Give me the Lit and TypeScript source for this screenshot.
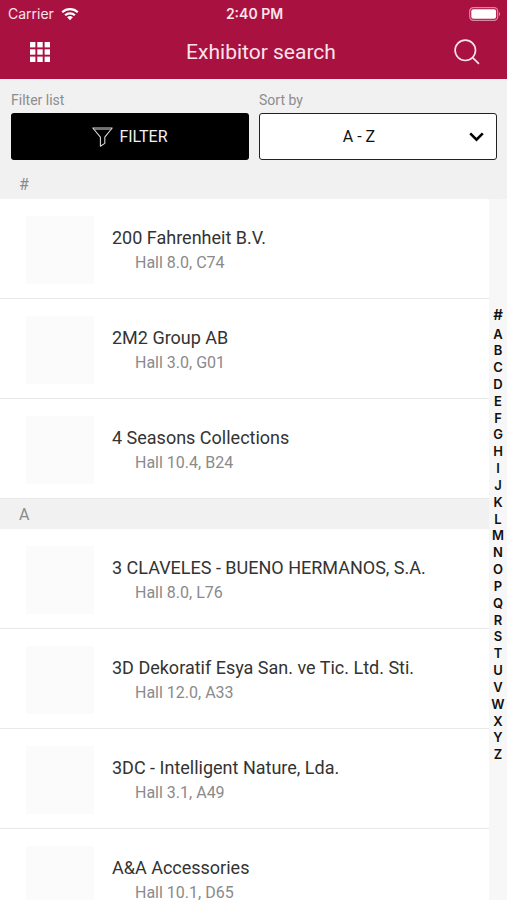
import { LitElement, html, svg, css } from "lit";
import { customElement, state } from "lit/decorators.js";

interface Exhibitor {
  name: string;
  hall: string;
}

interface Group {
  letter: string;
  items: Exhibitor[];
}

const GROUPS: Group[] = [
  {
    letter: "#",
    items: [
      { name: "200 Fahrenheit B.V.", hall: "Hall 8.0, C74" },
      { name: "2M2 Group AB", hall: "Hall 3.0, G01" },
      { name: "4 Seasons Collections", hall: "Hall 10.4, B24" },
    ],
  },
  {
    letter: "A",
    items: [
      { name: "3 CLAVELES - BUENO HERMANOS, S.A.", hall: "Hall 8.0, L76" },
      { name: "3D Dekoratif Esya San. ve Tic. Ltd. Sti.", hall: "Hall 12.0, A33" },
      { name: "3DC - Intelligent Nature, Lda.", hall: "Hall 3.1, A49" },
      { name: "A&A Accessories", hall: "Hall 10.1, D65" },
    ],
  },
];

const LETTERS = [..."ABCDEFGHIJKLMNOPQRSTUVWXYZ"];

@customElement("status-bar")
export class StatusBar extends LitElement {
  static styles = css`
    :host {
      display: grid;
      grid-template-columns: 1fr auto 1fr;
      align-items: center;
      height: 28px;
      padding: 0 6px 0 8px;
      color: #fbe3ea;
      font: 14px/28px Inter, sans-serif;
    }
    .carrier {
      display: flex;
      align-items: center;
      gap: 7px;
    }
    .time {
      font-weight: 600;
    }
    .battery {
      justify-self: end;
    }
    svg {
      display: block;
    }
  `;

  render() {
    return html`
      <span class="carrier">
        Carrier
        <svg width="18" height="14" viewBox="0 0 18 14" aria-hidden="true">
          <g fill="none" stroke="#fff" stroke-width="2.2">
            <path d="M1.2 5.2a11.2 11.2 0 0 1 15.6 0" />
            <path d="M4.1 8.3a7 7 0 0 1 9.8 0" />
          </g>
          <path d="M9 13.2 6.1 10.3a4.2 4.2 0 0 1 5.8 0z" fill="#fff" />
        </svg>
      </span>
      <span class="time">2:40 PM</span>
      <svg class="battery" width="32" height="14" viewBox="0 0 32 14" aria-hidden="true">
        <rect x="0.7" y="0.7" width="28" height="12.6" rx="3.6" fill="none" stroke="#d98aa2" stroke-width="1.2" />
        <rect x="2.3" y="2.3" width="24.8" height="9.4" rx="2" fill="#fff" />
        <path d="M30 5v4a2.4 2.4 0 0 0 0-4z" fill="#d98aa2" />
      </svg>
    `;
  }
}

@customElement("app-root")
export class AppRoot extends LitElement {
  @state() private sort = "az";

  static styles = css`
    :host {
      display: flex;
      flex-direction: column;
      height: 100vh;
      overflow: hidden;
      background: #fff;
      color: #333;
      font-family: Roboto, sans-serif;
    }
    * {
      box-sizing: border-box;
    }
    svg {
      display: block;
    }
    .top {
      flex: none;
      background: #a91141;
    }
    .bar {
      display: grid;
      grid-template-columns: 40px 1fr 40px;
      align-items: center;
      height: 51px;
      padding: 0 20px 3px;
    }
    .title {
      margin: 0;
      padding-left: 15px;
      color: #fbe3ea;
      font-size: 21px;
      font-weight: 400;
      line-height: 48px;
      text-align: center;
    }
    .icon {
      display: grid;
      place-items: center;
      width: 40px;
      height: 40px;
      padding: 0;
      border: 0;
      background: none;
    }
    .controls {
      flex: none;
      display: grid;
      grid-template-columns: 1fr 1fr;
      gap: 10px;
      padding: 12px 10px 9px 11px;
      background: #f1f1f1;
    }
    .label {
      display: block;
      margin-bottom: 4px;
      color: #8d8d8d;
      font-size: 14px;
      line-height: 18px;
    }
    .filter {
      display: flex;
      align-items: center;
      justify-content: center;
      gap: 6px;
      width: 100%;
      height: 47px;
      padding: 0;
      border: 0;
      border-radius: 3px;
      background: #000;
      color: #f1f1f1;
      font: 16px/20px Roboto, sans-serif;
    }
    .sort {
      display: grid;
      align-items: center;
    }
    .sort select,
    .sort svg {
      grid-area: 1 / 1;
    }
    .sort svg {
      justify-self: end;
      margin-right: 13px;
      pointer-events: none;
    }
    .sort select {
      width: 100%;
      height: 47px;
      padding: 0 38px 0 0;
      appearance: none;
      border: 1px solid #222;
      border-radius: 3px;
      background: #fff;
      color: #111;
      font: 16px/20px Roboto, sans-serif;
      text-align: center;
      text-align-last: center;
    }
    .body {
      position: relative;
      flex: 1;
      min-height: 0;
    }
    .list {
      height: 100%;
      overflow-y: auto;
      scrollbar-width: none;
    }
    .heading {
      margin: 0;
      height: 30px;
      padding: 0 19px;
      background: #f1f1f1;
      color: #8a8a8a;
      font-size: 16px;
      font-weight: 400;
      line-height: 32px;
    }
    .rows {
      margin: 0;
      padding: 0;
      list-style: none;
    }
    .row {
      display: flex;
      align-items: center;
      gap: 18px;
      height: 100px;
      padding: 2px 26px 0;
      border-bottom: 1px solid #e8e8e8;
    }
    .logo {
      flex: none;
      width: 68px;
      height: 68px;
      background: #fbfbfb;
    }
    .text {
      min-width: 0;
    }
    .name {
      margin: 0;
      font-size: 18px;
      line-height: 26px;
      white-space: nowrap;
    }
    .hall {
      margin: 0;
      padding-left: 23px;
      color: #8a8a8a;
      font-size: 16px;
      line-height: 24px;
    }
    .index {
      position: absolute;
      top: 30px;
      right: 0;
      bottom: 0;
      display: flex;
      flex-direction: column;
      justify-content: center;
      gap: 3px;
      width: 18px;
      padding-bottom: 30px;
      background: #f7f7f7;
    }
    .letters {
      display: flex;
      flex-direction: column;
      justify-content: space-between;
      height: 437px;
    }
    .letter {
      color: #111;
      font: 600 13px/16px Inter, sans-serif;
      text-align: center;
      text-decoration: none;
    }
    .hash {
      font-size: 15px;
    }
  `;

  private onSort(e: Event) {
    this.sort = (e.target as HTMLSelectElement).value;
  }

  private get groups(): Group[] {
    if (this.sort === "az") return GROUPS;
    return [...GROUPS].reverse().map((g) => ({ ...g, items: [...g.items].reverse() }));
  }

  render() {
    return html`
      <header class="top">
        <status-bar></status-bar>
        <div class="bar">
          <button class="icon" aria-label="Menu">
            <svg width="20" height="20" viewBox="0 0 20 20" fill="#fff">
              ${[0, 7.3, 14.6].map((y) =>
                [0, 7.3, 14.6].map((x) => svg`<rect x=${x} y=${y} width="5.4" height="5.4" />`)
              )}
            </svg>
          </button>
          <h1 class="title">Exhibitor search</h1>
          <button class="icon" aria-label="Search">
            <svg width="26" height="26" viewBox="0 0 26 26" fill="none" stroke="#fbe3ea" stroke-width="1.7">
              <circle cx="11.3" cy="11.3" r="10.2" />
              <path d="m18.4 18.4 6.6 6.4" />
            </svg>
          </button>
        </div>
      </header>

      <section class="controls">
        <div>
          <label class="label" for="filter">Filter list</label>
          <button class="filter" id="filter">
            <svg width="21" height="20" viewBox="0 0 21 20" fill="none" stroke="#d8d8d8" stroke-width="1.1" stroke-linejoin="round">
              <path d="M.8 1h19.4l-7.4 9.2v6.2l-4.4 2.8v-9z" />
              <path d="M2.6 2.4h15.8" stroke-width=".6" />
            </svg>
            FILTER
          </button>
        </div>
        <div>
          <label class="label" for="sort">Sort by</label>
          <div class="sort">
            <select id="sort" .value=${this.sort} @change=${this.onSort}>
              <option value="az">A - Z</option>
              <option value="za">Z - A</option>
            </select>
            <svg width="15" height="10" viewBox="0 0 15 10" fill="none" stroke="#000" stroke-width="2.6">
              <path d="m1.2 1.4 6.3 6.2 6.3-6.2" />
            </svg>
          </div>
        </div>
      </section>

      <main class="body">
        <div class="list">
          ${this.groups.map(
            (g) => html`
              <h2 class="heading">${g.letter}</h2>
              <ul class="rows">
                ${g.items.map(
                  (x) => html`
                    <li class="row">
                      <div class="logo"></div>
                      <div class="text">
                        <p class="name">${x.name}</p>
                        <p class="hall">${x.hall}</p>
                      </div>
                    </li>
                  `
                )}
              </ul>
            `
          )}
        </div>
        <nav class="index" aria-label="Index">
          <a class="letter hash" href="#">#</a>
          <div class="letters">
            ${LETTERS.map((l) => html`<a class="letter" href="#${l}">${l}</a>`)}
          </div>
        </nav>
      </main>
    `;
  }
}
